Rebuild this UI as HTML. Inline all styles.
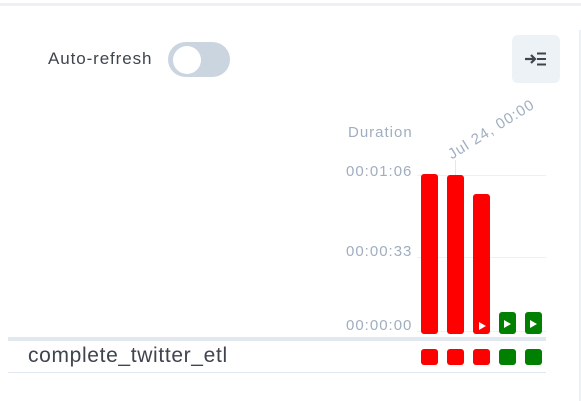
<!DOCTYPE html>
<html><head><style>
body{margin:0;width:581px;height:401px;background:#fff;position:relative;overflow:hidden;font-family:"Liberation Sans",sans-serif}
.a{position:absolute}
.lbl{color:#a0aec0;font-size:15px;letter-spacing:1px}
.bar{position:absolute;width:17px;border-radius:3px}
.r{background:#ff0000}.g{background:#008000}
.play{position:absolute;right:4px;bottom:4px;width:0;height:0;border-left:7px solid #fff;border-top:4.5px solid transparent;border-bottom:4.5px solid transparent}
</style></head><body>
<div class="a" style="left:0;top:3px;width:581px;height:3px;background:#edf0f5"></div>
<div class="a" style="left:579px;top:30px;width:2px;height:371px;background:#edf0f5"></div>
<div class="a" style="left:48px;top:49px;font-size:17px;letter-spacing:0.9px;color:#3f444d">Auto-refresh</div>
<div class="a" style="left:168px;top:42px;width:62px;height:35px;border-radius:18px;background:#cbd5e0"></div>
<div class="a" style="left:173px;top:46px;width:28px;height:28px;border-radius:50%;background:#fff"></div>
<div class="a" style="left:512px;top:35px;width:48px;height:48px;border-radius:6px;background:#edf2f7"></div>
<svg class="a" style="left:524px;top:51px" width="24" height="16" viewBox="0 0 24 16"><path d="M1 8h9M7 4l4 4-4 4" stroke="#3f444d" stroke-width="2.2" fill="none"/><path d="M13 2.5h9M13 8h9M13 13.5h9" stroke="#3f444d" stroke-width="2"/></svg>
<div class="a lbl" style="left:348px;top:124px">Duration</div>
<div class="a lbl" style="left:454px;top:146px;transform:rotate(-32deg);transform-origin:0 100%;white-space:nowrap">Jul 24, 00:00</div>
<div class="a" style="left:455px;top:160px;width:1px;height:15px;background:#e2e8f0"></div>
<div class="a lbl" style="left:346px;top:163px">00:01:06</div>
<div class="a lbl" style="left:346px;top:243px">00:00:33</div>
<div class="a lbl" style="left:346px;top:317px">00:00:00</div>
<div class="a" style="left:417px;top:175px;width:129px;height:1px;background:#edf0f5"></div>
<div class="a" style="left:417px;top:257px;width:129px;height:1px;background:#edf0f5"></div>
<div class="a" style="left:417px;top:331px;width:129px;height:1px;background:#edf0f5"></div>
<div class="bar r" style="left:421px;top:174px;height:160px"></div>
<div class="bar r" style="left:447px;top:175px;height:159px"></div>
<div class="bar r" style="left:473px;top:194px;height:140px"><div class="play"></div></div>
<div class="bar g" style="left:499px;top:312px;height:22px"><div class="play" style="right:5px;bottom:6px"></div></div>
<div class="bar g" style="left:525px;top:312px;height:22px"><div class="play" style="right:5px;bottom:6px"></div></div>
<div class="a" style="left:8px;top:337px;width:538px;height:4px;background:#e2e8f0"></div>
<div class="a" style="left:28px;top:344px;font-size:21px;letter-spacing:0.65px;color:#3f444d">complete_twitter_etl</div>
<div class="bar r" style="left:421px;top:349px;height:16px"></div>
<div class="bar r" style="left:447px;top:349px;height:16px"></div>
<div class="bar r" style="left:473px;top:349px;height:16px"></div>
<div class="bar g" style="left:499px;top:349px;height:16px"></div>
<div class="bar g" style="left:525px;top:349px;height:16px"></div>
<div class="a" style="left:8px;top:372px;width:538px;height:1px;background:#e2e8f0"></div>
</body></html>
